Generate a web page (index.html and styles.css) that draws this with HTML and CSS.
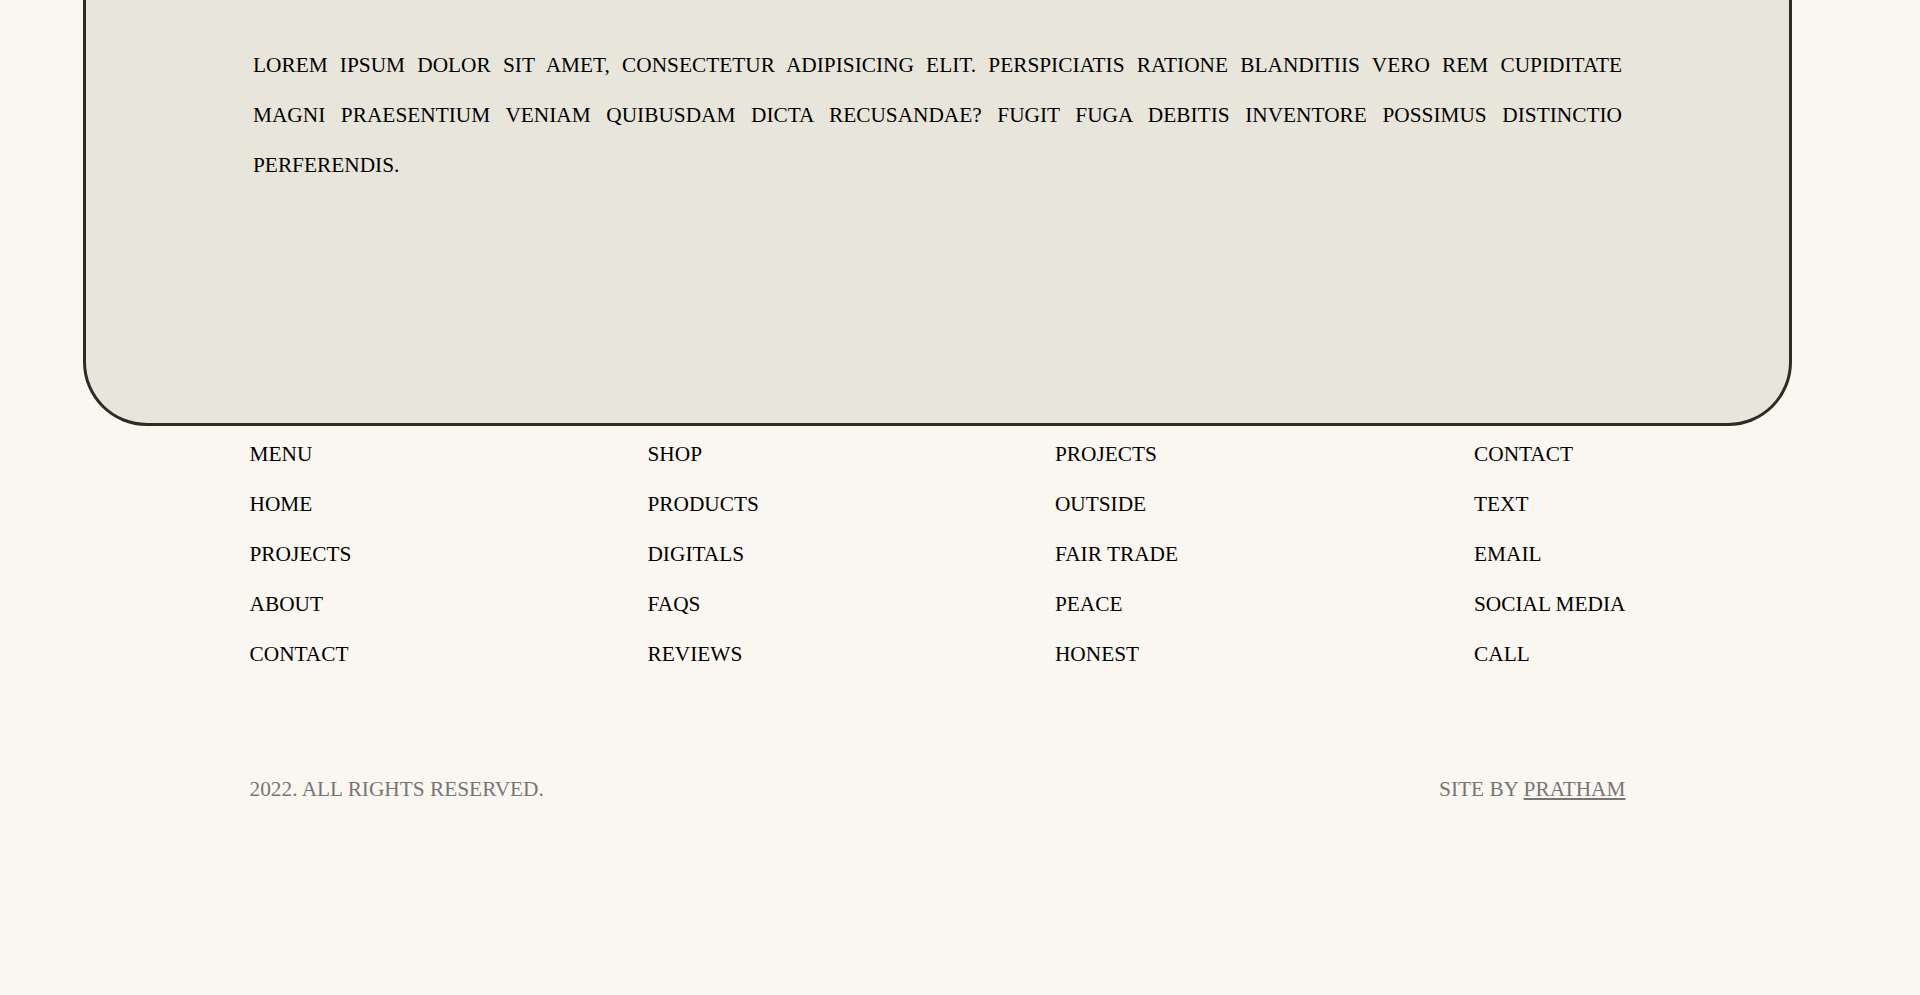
FILE: index.html
```html
<!DOCTYPE html>
<html lang="en">
<head>
<meta charset="utf-8">
<title>Footer</title>
<link rel="stylesheet" href="styles.css">
</head>
<body>
<div class="page">
  <section class="about-card">
    <p class="about-text">Lorem ipsum dolor sit amet, consectetur adipisicing elit. Perspiciatis ratione blanditiis vero rem cupiditate magni praesentium veniam quibusdam dicta recusandae? Fugit fuga debitis inventore possimus distinctio perferendis.</p>
  </section>
  <footer class="site-footer">
    <div class="footer-cols">
      <ul class="footer-col">
        <li>Menu</li>
        <li>Home</li>
        <li>Projects</li>
        <li>About</li>
        <li>Contact</li>
      </ul>
      <ul class="footer-col">
        <li>Shop</li>
        <li>Products</li>
        <li>Digitals</li>
        <li>FAQs</li>
        <li>Reviews</li>
      </ul>
      <ul class="footer-col">
        <li>Projects</li>
        <li>Outside</li>
        <li>Fair Trade</li>
        <li>Peace</li>
        <li>Honest</li>
      </ul>
      <ul class="footer-col">
        <li>Contact</li>
        <li>Text</li>
        <li>Email</li>
        <li>Social Media</li>
        <li>Call</li>
      </ul>
    </div>
    <div class="footer-bottom">
      <span>2022. All rights reserved.</span>
      <span>Site by <a class="credit" href="#">Pratham</a></span>
    </div>
  </footer>
</div>
</body>
</html>
```

FILE: styles.css
```css
html {
  overflow-y: scroll;
}
body {
  margin: 0;
  background: #faf7f0;
  font-family: "Liberation Serif", "Times New Roman", serif;
  font-size: 21.333px;
  color: #000;
  text-transform: uppercase;
}
.page {
  width: 1875px;
}
.about-card {
  margin: 0 83px;
  background: #e8e6db;
  border: 3px solid #2e2b24;
  border-top: none;
  border-radius: 0 0 64px 64px;
  padding: 40px 167px 233px;
}
.about-text {
  margin: 0;
  line-height: 50px;
  text-align: justify;
  word-spacing: 2px;
}
.site-footer {
  width: 1376px;
  margin: 3px auto 0;
}
.footer-cols {
  display: flex;
  justify-content: space-between;
}
.footer-col {
  list-style: none;
  margin: 0;
  padding: 0;
  line-height: 50px;
}
.footer-bottom {
  display: flex;
  justify-content: space-between;
  margin-top: 85px;
  line-height: 50px;
  color: #767676;
}
.credit {
  color: #767676;
  text-decoration: underline;
}
```
